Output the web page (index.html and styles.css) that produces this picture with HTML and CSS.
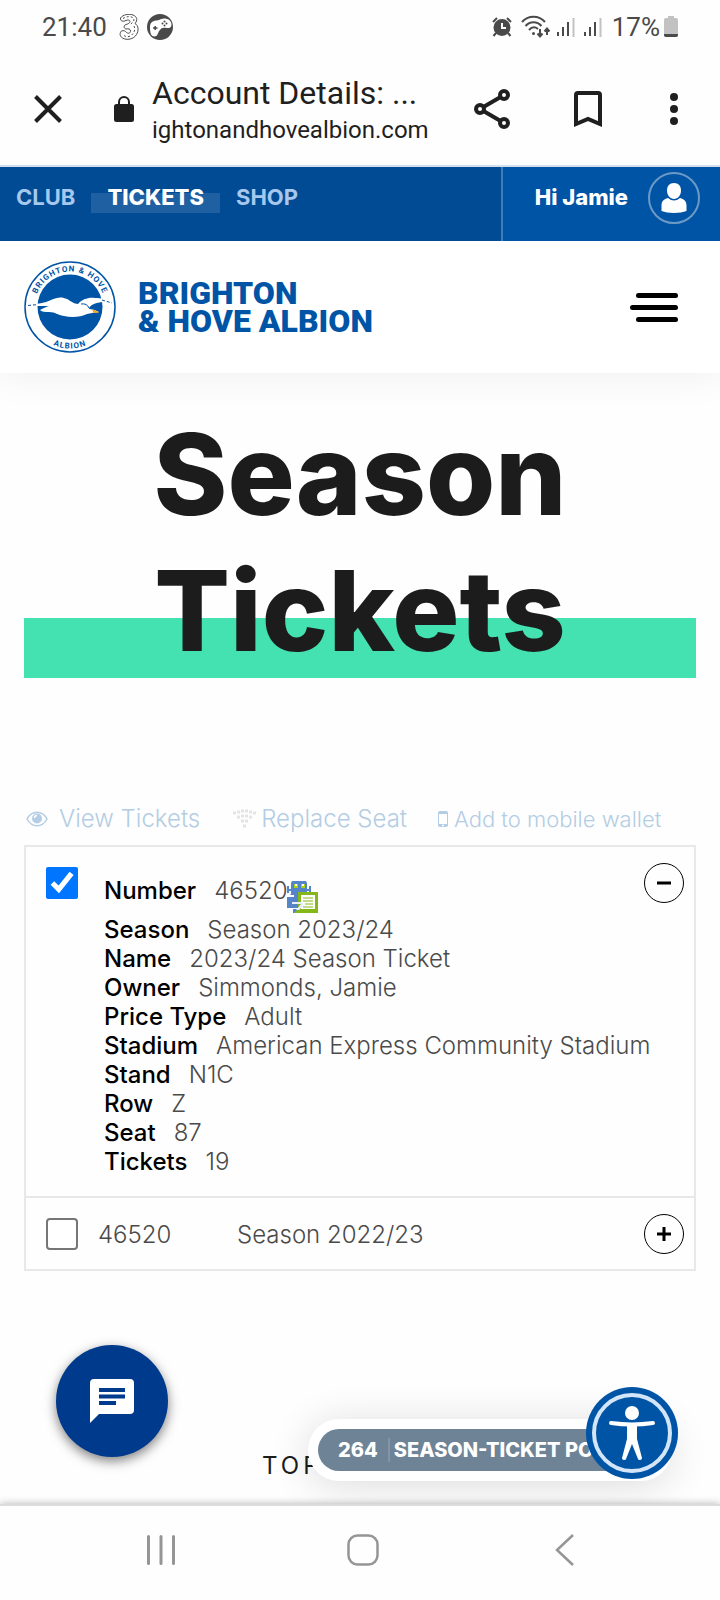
FILE: index.html
```html
<!DOCTYPE html>
<html lang="en">
<head>
  <meta charset="UTF-8">
  <meta name="viewport" content="width=device-width, initial-scale=1.0">
  <title>Account Details: Season Tickets</title>
  <link rel="stylesheet" href="styles.css">
</head>
<body>
  <div class="status-bar">
    <span class="clock">21:40</span>
    <svg class="icon-three" width="20" height="26" viewBox="0 0 20 26" fill="none" stroke="#4a4a4a">
      <path d="M1.500 4C4 .5 10-.5 14 1c4 1.500 5 5 2 8.500 3.500 2 4 7 1.500 11-3 5-10 6-14 3.500-3-2-3-5-1-7 2-1 4 0 5 1.500 2 1.500 4 .5 4-1.500s-2-2.500-4.500-2C4.500 14.500 4.500 11 7 10.500c2-.5 4-1.500 4-3S8.500 5.500 7 6.500C4 8 1 7 1.500 4z"/>
      <path d="M4 4.500C8 2 13 2 14.500 4.500S13 9 10.500 11M15 12c2 4-.5 9-5 10.500-3 .5-5.500-.5-6-2.500" stroke-dasharray="2 2"/>
    </svg>
    <svg class="icon-game" width="26" height="26" viewBox="0 0 26 26">
      <circle cx="13" cy="13" r="13" fill="#4a4a4a"/>
      <path d="M3 13C3 9 5 7 9 6.500c3 0 4-1.500 8-2 4 0 7.500 2 7.500 6 0 3-2 4-5 3.500-4-.5-5 0-7 2.500-2 3-2 6-5 6-4 0-4.500-5-4.500-9.500z" fill="#fff"/>
      <path d="M6 14h4.500M8.200 12v4" stroke="#4a4a4a" stroke-width="1.500"/>
      <g fill="#4a4a4a"><circle cx="17.500" cy="7.500" r="1"/><circle cx="17.500" cy="11.500" r="1"/><circle cx="15.500" cy="9.500" r="1"/><circle cx="19.500" cy="9.500" r="1"/></g>
    </svg>
    <span class="spacer"></span>
    <svg width="20" height="20" viewBox="0 0 20 20" fill="none" stroke="#4a4a4a">
      <circle cx="10" cy="10.500" r="8.500" fill="#4a4a4a" stroke="none"/>
      <path d="M1 5l4-4M15 1l4 4M4 16l-2.500 3M16 16l2.500 3" stroke-width="2"/>
      <path d="M10 6v5h4" stroke="#fff" stroke-width="2"/>
    </svg>
    <svg class="icon-wifi" width="30" height="24" viewBox="0 0 30 24" fill="none" stroke="#4a4a4a" stroke-width="2">
      <path d="M1 7c6-7 17-7 23 0M4.500 11c4.500-5 11.500-5 16 0M8 15c3-3.500 6-3.500 9-1"/>
      <circle cx="12.500" cy="18.500" r="1.500" fill="#4a4a4a" stroke="none"/>
      <path d="M19 14v7M16.500 18.500l2.500 3 2.500-3M26 20v-6M23.500 16.500l2.500-3 2.500 3"/>
    </svg>
    <svg class="icon-signal" width="19" height="20" viewBox="0 0 19 20" stroke-width="2">
      <path d="M2 19v-4M7 19v-9M12 19V5" stroke="#4a4a4a"/><path d="M17.500 20V1" stroke="#c2c2c2"/>
    </svg>
    <svg class="icon-signal" width="19" height="20" viewBox="0 0 19 20" stroke-width="2">
      <path d="M2 19v-4M7 19v-9M12 19V5" stroke="#4a4a4a"/><path d="M17.500 20V1" stroke="#c2c2c2"/>
    </svg>
    <span class="battery-level">17%</span>
    <svg width="14" height="21" viewBox="0 0 14 21">
      <path d="M4 0h6v2h2q2 0 2 2v15q0 2-2 2H2q-2 0-2-2V4q0-2 2-2h2z" fill="#c2c2c2"/>
      <path d="M0 18h14v1q0 2-2 2H2q-2 0-2-2z" fill="#4a4a4a"/>
    </svg>
  </div>

  <div class="browser-bar">
    <button class="browser-btn" aria-label="Close">
      <svg width="28" height="28" viewBox="0 0 28 28" stroke="#1f1f1f" stroke-width="4"><path d="M1.500 1.500l25 25M26.500 1.500l-25 25"/></svg>
    </button>
    <svg class="icon-lock" width="20" height="26" viewBox="0 0 20 26">
      <rect y="8" width="20" height="18" rx="2.500" fill="#1f1f1f"/>
      <path d="M5 9V6a5 5 0 0 1 10 0v3" fill="none" stroke="#1f1f1f" stroke-width="2"/>
    </svg>
    <div class="page-info">
      <div class="page-name">Account Details: ...</div>
      <div class="page-url">ightonandhovealbion.com</div>
    </div>
    <button class="browser-btn" aria-label="Share">
      <svg width="36" height="40" viewBox="0 0 36 40" fill="none" stroke="#1f1f1f" stroke-width="4">
        <path d="M6 20L30 6M6 20l24 14"/>
        <g fill="#fff"><circle cx="6" cy="20" r="4"/><circle cx="30" cy="6" r="4"/><circle cx="30" cy="34" r="4"/></g>
      </svg>
    </button>
    <button class="browser-btn bookmark" aria-label="Bookmark">
      <svg width="28" height="36" viewBox="0 0 28 36" fill="none" stroke="#1f1f1f" stroke-width="4"><path d="M2 33V4q0-2 2-2h20q2 0 2 2v29l-12-5z"/></svg>
    </button>
    <button class="browser-btn more" aria-label="More">
      <svg width="8" height="32" viewBox="0 0 8 32" fill="#1f1f1f"><circle cx="4" cy="4" r="4"/><circle cx="4" cy="16" r="4"/><circle cx="4" cy="28" r="4"/></svg>
    </button>
  </div>

  <div class="top-bar">
    <nav class="top-nav">
      <a href="#">CLUB</a>
      <a href="#" class="active">TICKETS</a>
      <a href="#">SHOP</a>
    </nav>
    <a href="#" class="user">
      <span>Hi Jamie</span>
      <span class="avatar">
        <svg width="26" height="32" viewBox="0 0 26 32" fill="#fff">
          <path d="M13 1c4.500 0 7 3 7 7.500S17 17 13 17 6 13 6 8.500 8.500 1 13 1z"/>
          <path d="M7 16q6 5 12 0c4 1 6.500 3 6.500 7.500V29c-6 2.500-19 2.500-25 0v-5.500C.5 19 3 17 7 16z"/>
        </svg>
      </span>
    </a>
  </div>

  <header class="site-header">
    <a href="#" class="brand">
      <svg width="92" height="92" viewBox="0 0 92 92">
        <defs>
          <path id="arc-top" d="M10.500 46a35.500 35.500 0 0 1 71 0"/>
          <path id="arc-bottom" d="M4.500 46a41.500 41.500 0 0 0 83 0"/>
        </defs>
        <circle cx="46" cy="46" r="45" fill="#fff" stroke="#0054a6" stroke-width="1.500"/>
        <circle cx="46" cy="46" r="32.500" fill="#0054a6"/>
        <text class="crest-text"><textPath href="#arc-top" startOffset="50%" text-anchor="middle">BRIGHTON &amp; HOVE</textPath></text>
        <text class="crest-text"><textPath href="#arc-bottom" startOffset="50%" text-anchor="middle">ALBION</textPath></text>
        <path d="M4 44c9-1 17-2 23-5 6-3 11-3.500 16-1 4 2 7 5 11 5 4-5 11-7 17-6 6 0 11 1 17 5-8-1-14-1-18 1-3 1-5 3-5 5 3 0 6 1 10 3-5 1-9 1-12 2-6 3-15 4-23 2-7-1-8-4-15-4-4 0-7 0-9-2 3-2 6-3 9-4-8 0-14 0-21-1z" fill="#fff"/>
        <path d="M4 44.500l10-1M78 39l10 3" stroke="#0054a6" stroke-dasharray="3 2"/>
        <path d="M57 43q6-1 8 4" stroke="#0054a6" fill="none"/>
        <path d="M67 48.500c3 0 6 1 8 3.500l-7-.5c2-.5 1-2-1-3z" fill="#f5a81c"/>
      </svg>
      <span class="brand-name">BRIGHTON<br>&amp; HOVE ALBION</span>
    </a>
    <button class="menu-btn" aria-label="Menu">
      <span></span>
      <span></span>
      <span></span>
    </button>
  </header>

  <main class="content">
    <h1>Season Tickets</h1>

    <div class="actions">
      <a href="#" class="view">
        <svg width="22" height="16" viewBox="0 0 22 16" fill="none" stroke="#b3cde4" stroke-width="1.500">
          <path d="M1 8c5-9 15-9 20 0-5 9-15 9-20 0z"/><circle cx="11" cy="7.500" r="5" fill="#b3cde4" stroke="none"/><path d="M8.500 7q0-2.500 2.500-2.500" stroke="#fff"/>
        </svg>
        View Tickets
      </a>
      <a href="#" class="replace">
        <svg width="24" height="20" viewBox="0 0 24 20" fill="none" stroke="#e4e4e4" stroke-width="3">
          <path d="M0 4h3M20 4h3M4 3h3M8 2h3M12 2h3M16 3h3M4 8h3M8 7h3M12 7h3M16 8h3M8 12h3M12 12h3M10 17h3"/>
        </svg>
        Replace Seat
      </a>
      <a href="#" class="wallet">
        <svg width="10" height="16" viewBox="0 0 10 16"><rect width="10" height="16" rx="2" fill="#b3cde4"/><rect x="1" y="3" width="8" height="10" fill="#fff"/><circle cx="5" cy="14.500" r="1" fill="#fff"/></svg>
        Add to mobile wallet
      </a>
    </div>

    <div class="tickets">
      <div class="ticket open">
        <input type="checkbox" aria-label="Season 2023/24" checked>
        <dl class="details">
          <div class="number">
            <dt>Number</dt>
            <dd>46520
              <svg class="robot" width="32" height="32" viewBox="0 0 32 32">
                <path d="M5 0h14l1 2v11H4V2zM0 5h2v3h2v2H2v2H0zM24 5h-2v3h-2v2h2v2h2zM4 13h15v12H1V16z" fill="#5585c8"/>
                <path d="M7 3h4v4H7zM14 3h4v4h-4z" fill="#a5d40a"/><path d="M8 3h2v2H8zM15 3h2v2h-2z" fill="#fff"/>
                <path d="M0 14h7v2H0z" fill="#fff"/>
                <path d="M0 16h11v11H0zM6 28h5v4H6z" fill="#5585c8"/>
                <path d="M11 11h20v21H7l4-4z" fill="#84b818"/>
                <path d="M14 14h14v14H14z" fill="#fff"/>
                <path d="M16 17h10M16 20h10M18 23h8M16 26h10" stroke="#84b818" stroke-width="1"/>
                <path d="M5 21h11v2H5zM14 23l3 1-5 5h-3z" fill="#e6eefc"/>
              </svg>
            </dd>
          </div>
          <div><dt>Season</dt><dd>Season 2023/24</dd></div>
          <div><dt>Name</dt><dd>2023/24 Season Ticket</dd></div>
          <div><dt>Owner</dt><dd>Simmonds, Jamie</dd></div>
          <div><dt>Price Type</dt><dd>Adult</dd></div>
          <div><dt>Stadium</dt><dd>American Express Community Stadium</dd></div>
          <div><dt>Stand</dt><dd>N1C</dd></div>
          <div><dt>Row</dt><dd>Z</dd></div>
          <div><dt>Seat</dt><dd>87</dd></div>
          <div><dt>Tickets</dt><dd>19</dd></div>
        </dl>
        <button class="toggle" aria-label="Hide details">
          <svg width="14" height="14" viewBox="0 0 14 14" stroke="#000" stroke-width="3"><path d="M0 7h14"/></svg>
        </button>
      </div>
      <div class="ticket closed">
        <input type="checkbox" id="ticket-2">
        <label for="ticket-2"><span>46520</span><span>Season 2022/23</span></label>
        <button class="toggle" aria-label="Show details">
          <svg width="14" height="14" viewBox="0 0 14 14" stroke="#000" stroke-width="3"><path d="M0 7h14M7 0v14"/></svg>
        </button>
      </div>
    </div>

    <p class="footer-title">TOP</p>

    <button class="chat-btn" aria-label="Chat">
      <svg width="44" height="44" viewBox="0 0 44 44">
        <path d="M4 0h36q4 0 4 4v27q0 4-4 4H9l-9 9V4q0-4 4-4z" fill="#fff"/>
        <path d="M9 11h26M9 17.500h26M9 24h17" stroke="#003a8c" stroke-width="4"/>
      </svg>
    </button>
    <div class="points">
      <a href="#"><span class="points-total">264</span>SEASON-TICKET PO</a>
    </div>
    <button class="access-btn" aria-label="Accessibility">
      <svg width="92" height="92" viewBox="0 0 92 92">
        <circle cx="46" cy="46" r="46" fill="#0054a6"/>
        <circle cx="46" cy="46" r="38" fill="none" stroke="#d3e5f8" stroke-width="4"/>
        <circle cx="46" cy="26" r="7" fill="#fff"/>
        <path d="M25 36q21 3 42 0" fill="none" stroke="#fff" stroke-width="4" stroke-linecap="round"/>
        <path d="M41 38h10v14l5 19q0 2-2 2t-2-1l-6-15-6 15q0 1-2 1t-2-2l5-19z" fill="#fff"/>
      </svg>
    </button>
  </main>

  <div class="system-nav">
    <button aria-label="Recent apps">
      <svg width="30" height="32" viewBox="0 0 30 32" stroke="#959595" stroke-width="3" stroke-linecap="round"><path d="M2.500 2.500v27M15 2.500v27M27.500 2.500v27"/></svg>
    </button>
    <button aria-label="Home">
      <svg width="32" height="32" viewBox="0 0 32 32"><rect x="1.500" y="1.500" width="29" height="29" rx="9" fill="none" stroke="#959595" stroke-width="2.500"/></svg>
    </button>
    <button aria-label="Back">
      <svg width="20" height="32" viewBox="0 0 20 32" fill="none" stroke="#959595" stroke-width="2.500"><path d="M18 1L2 16l16 15"/></svg>
    </button>
  </div>
</body>
</html>
```
FILE: styles.css
```css
* {
  box-sizing: border-box;
}
body {
  margin: 0;
  min-height: 100vh;
  display: flex;
  flex-direction: column;
  font-family: Inter, "Liberation Sans", sans-serif;
  background-color: #fefefe;
  color: #1c1c1c;
}
a {
  color: inherit;
  text-decoration: none;
}
button {
  padding: 0;
  border: none;
  background: none;
  cursor: pointer;
}
svg {
  display: block;
  flex-shrink: 0;
}

/* phone status bar */
.status-bar {
  display: flex;
  align-items: center;
  height: 53px;
  padding: 0 42px;
  font-family: Roboto, sans-serif;
  font-size: 26px;
  color: #4a4a4a;
}
.icon-three {
  margin-left: 12px;
}
.icon-game {
  margin-left: 8px;
}
.spacer {
  flex: 1;
}
.icon-wifi {
  margin-left: 9px;
}
.icon-signal {
  margin-left: 5px;
}
.icon-signal + .icon-signal {
  margin-left: 8px;
}
.battery-level {
  margin: 0 4px 0 10px;
}

/* browser toolbar */
.browser-bar {
  display: flex;
  align-items: center;
  height: 114px;
  padding: 0 42px 0 34px;
  border-bottom: 2px solid #d0e0ef;
  font-family: Roboto, sans-serif;
  color: #1f1f1f;
}
.icon-lock {
  margin: 0 18px 0 52px;
}
.page-info {
  flex: 1;
  padding-top: 4px;
  overflow: hidden;
  white-space: nowrap;
}
.page-name {
  font-size: 32px;
  line-height: 38px;
}
.page-url {
  font-size: 24px;
  line-height: 36px;
}
.bookmark {
  margin-left: 64px;
}
.more {
  margin-left: 68px;
}

/* club bar */
.top-bar {
  display: flex;
  height: 74px;
  background-color: #004b94;
  font-size: 22px;
  font-weight: 700;
  line-height: 50px;
}
.top-nav {
  flex: 1;
  display: flex;
  padding-top: 5px;
  color: #a6c8ec;
}
.top-nav a {
  height: 52px;
  padding: 0 16px;
}
.top-nav .active {
  color: #fff;
  font-weight: 800;
  background: linear-gradient(#1f60a3, #1f60a3) 0 21px / 100% 20px no-repeat;
}
.user {
  display: flex;
  gap: 20px;
  padding: 5px 20px 0 32px;
  border-left: 2px solid #3b7dbd;
  background-color: #0054a6;
  color: #fff;
  font-weight: 800;
}
.avatar {
  display: flex;
  align-items: center;
  justify-content: center;
  width: 52px;
  height: 52px;
  border: 2px solid #6c9ac6;
  border-radius: 50%;
}

.site-header {
  display: flex;
  align-items: center;
  justify-content: space-between;
  height: 132px;
  padding: 0 42px 0 24px;
  background-color: #fff;
  box-shadow: 0 0 40px rgba(0, 0, 0, 0.07);
  clip-path: inset(0 0 -60px 0);
}
.brand {
  display: flex;
  align-items: center;
  gap: 22px;
}
.brand-name {
  font-family: Roboto, sans-serif;
  font-size: 32px;
  font-weight: 900;
  line-height: 28px;
  color: #0054a6;
}
.crest-text {
  font-family: Roboto, sans-serif;
  font-size: 8px;
  font-weight: 700;
  letter-spacing: 1px;
  fill: #0054a6;
}
.menu-btn {
  display: flex;
  flex-direction: column;
  align-items: flex-end;
  gap: 7px;
}
.menu-btn span {
  width: 42px;
  height: 5px;
  border-radius: 3px;
  background-color: #000;
}
.menu-btn span:nth-child(2) {
  width: 48px;
}

/* page */
.content {
  position: relative;
  flex: 1;
  padding: 0 24px;
}
h1 {
  margin: 33px 0 126px;
  padding: 0 100px;
  font-size: 112px;
  font-weight: 800;
  line-height: 136px;
  text-align: center;
  background: linear-gradient(#44e2b0, #44e2b0) bottom / 100% 60px no-repeat;
}
.actions {
  display: flex;
  margin: 0 0 11px 2px;
  font-size: 24px;
  font-weight: 300;
  line-height: 30px;
  color: #b3cde4;
}
.actions a {
  display: flex;
  align-items: center;
}
.view {
  gap: 11px;
}
.replace {
  gap: 4px;
  margin-left: 33px;
}
.actions .wallet {
  gap: 6px;
  margin-left: 31px;
  font-size: 22px;
}
.tickets {
  border: 2px solid #e8e8e8;
}
.ticket {
  display: flex;
  padding: 16px 10px 20px 20px;
  font-size: 24px;
  font-weight: 300;
  line-height: 29px;
  color: #4a4a4a;
}
.ticket input {
  flex-shrink: 0;
  width: 32px;
  height: 32px;
  margin: 4px 0 0;
}
.closed {
  align-items: center;
  padding-bottom: 15px;
  border-top: 2px solid #e8e8e8;
}
.closed input {
  margin: 0;
}
.ticket input:not(:checked) {
  appearance: none;
  border: 2px solid #767676;
  border-radius: 4px;
  background-color: #fff;
}
.closed label {
  flex: 1;
  display: flex;
  padding-left: 20px;
}
.closed label span:first-child {
  width: 139px;
}
.details {
  flex: 1;
  margin: 8px 0 0 26px;
  white-space: nowrap;
}
.details div {
  display: flex;
  gap: 18px;
}
.details .number {
  margin-bottom: 5px;
  line-height: 39px;
}
dt {
  font-weight: 500;
  color: #000;
}
dd {
  position: relative;
  margin: 0;
}
.robot {
  position: absolute;
  left: 100%;
  top: 10px;
}
.toggle {
  display: flex;
  align-items: center;
  justify-content: center;
  flex-shrink: 0;
  width: 40px;
  height: 40px;
  margin-left: -40px;
  border: 1px solid #000;
  border-radius: 50%;
}
.footer-title {
  margin: 179px 0 0 238px;
  font-size: 24px;
  line-height: 32px;
  letter-spacing: 4px;
}

/* floating widgets */
.chat-btn {
  position: absolute;
  left: 56px;
  bottom: 47px;
  display: flex;
  align-items: center;
  justify-content: center;
  width: 112px;
  height: 112px;
  border-radius: 50%;
  background-color: #003a8c;
  box-shadow: 0 4px 12px rgba(0, 0, 0, 0.5);
}
.points {
  position: absolute;
  right: 48px;
  bottom: 23px;
  width: 364px;
  padding: 10px;
  border-radius: 31px;
  background-color: #fff;
  box-shadow: 0 4px 40px rgba(0, 0, 0, 0.14);
}
.points a {
  display: block;
  padding-left: 20px;
  border-radius: 21px;
  background-color: #6f8396;
  color: #fff;
  font-size: 20px;
  font-weight: 800;
  line-height: 42px;
  white-space: nowrap;
}
.points-total {
  margin-right: 4px;
  padding-right: 10px;
  border-right: 2px solid #8394a8;
}
.access-btn {
  position: absolute;
  right: 42px;
  bottom: 25px;
}

.system-nav {
  position: relative;
  display: flex;
  align-items: center;
  height: 96px;
  padding: 0 54px 6px 60px;
  border-top: 2px solid #dcdcdc;
  background-color: #fefefe;
  box-shadow: 0 0 8px rgba(0, 0, 0, 0.3);
}
.system-nav button {
  flex: 1;
}
.system-nav svg {
  margin: 0 auto;
}
```
